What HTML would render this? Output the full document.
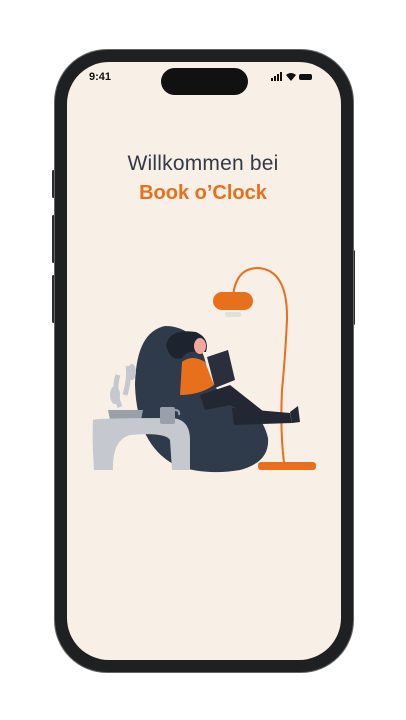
<!DOCTYPE html>
<html><head><meta charset="utf-8"><style>
html,body{margin:0;padding:0;background:#fff;width:406px;height:720px;overflow:hidden;font-family:"Liberation Sans",sans-serif}
.frame{position:absolute;left:55px;top:50px;width:298px;height:622px;border-radius:52px;background:#1f2022;box-shadow:0 0 0 1px #666}
.screen{position:absolute;left:67px;top:62px;width:274px;height:598px;border-radius:42px;background:#f8efe6;overflow:hidden}
.island{position:absolute;left:161px;top:68px;width:87px;height:27px;border-radius:14px;background:#111}
.btn{position:absolute;background:#2a2b2e;width:3px;border-radius:2px}
.t1{position:absolute;left:0;width:406px;top:152px;text-align:center;font-size:21px;color:#333a47;letter-spacing:0.2px}
.t2{position:absolute;left:0;width:406px;top:182px;text-align:center;font-size:20px;font-weight:bold;color:#e8701c}
.time{position:absolute;left:89px;top:71px;font-size:11px;font-weight:bold;color:#111}
</style></head><body>
<div class="btn" style="left:52px;top:170px;height:28px"></div>
<div class="btn" style="left:52px;top:215px;height:48px"></div>
<div class="btn" style="left:52px;top:275px;height:48px"></div>
<div class="btn" style="left:352px;top:250px;height:75px"></div>
<div class="frame"></div>
<div class="screen"></div>
<div class="island"></div>
<div class="time">9:41</div>
<svg style="position:absolute;left:270px;top:72px" width="44" height="10">
<rect x="1" y="6" width="2" height="3" fill="#111"/><rect x="4" y="4" width="2" height="5" fill="#111"/><rect x="7" y="2" width="2" height="7" fill="#111"/><rect x="10" y="0" width="2" height="9" fill="#111"/>
<path d="M16 3 Q21 -1 26 3 L21 9 Z" fill="#111"/>
<rect x="29" y="2" width="13" height="6" rx="2" fill="#111"/></svg>
<div class="t1">Willkommen bei</div>
<div class="t2">Book o’Clock</div>
<svg style="position:absolute;left:0;top:0" width="406" height="720">
<path d="M233 296 Q236 268 258 268 Q288 270 287 320 Q285 360 282 390 Q280 430 284 463" fill="none" stroke="#e8701c" stroke-width="2"/>
<rect x="258" y="462" width="58" height="8" rx="3" fill="#e8701c"/>
<rect x="213" y="292" width="40" height="18" rx="9" fill="#e8701c"/>
<rect x="225" y="312" width="16" height="5" rx="2" fill="#dde0dc"/>
<path d="M165 326 Q136 332 135 385 Q137 445 175 465 Q205 476 240 470 Q270 462 268 438 Q262 412 238 405 Q212 395 205 360 Q195 326 165 326Z" fill="#2f3a4a"/>
<path d="M166 345 Q170 328 196 332 Q210 338 206 352 L200 352 Q186 350 182 358 Q170 362 166 345Z" fill="#1e2330"/>
<ellipse cx="200" cy="346" rx="6" ry="8" fill="#f1a7a0"/>
<path d="M182 362 Q192 354 205 362 L214 385 Q200 395 180 395 Z" fill="#e8701c"/>
<path d="M207 357 L228 350 L235 380 L215 388 Z" fill="#2b2e3d"/>
<path d="M200 395 L230 385 L268 415 L262 420 L230 405 L205 410Z" fill="#222733"/>
<path d="M232 408 L290 413 L292 423 L234 425 Z" fill="#222733"/>
<path d="M290 412 L298 406 L300 422 L292 423Z" fill="#222733"/>
<path d="M120 407 Q113 390 118 375 M125 395 Q130 378 128 366" stroke="#c5c8cf" stroke-width="5" fill="none"/>
<ellipse cx="115" cy="395" rx="5" ry="9" fill="#c5c8cf"/>
<ellipse cx="132" cy="372" rx="4" ry="8" fill="#c5c8cf"/>
<path d="M108 410 L143 410 L140 425 L111 425Z" fill="#9aa0aa"/>
<path d="M93 420 Q95 418 170 418 Q190 418 190 440 L190 470 L172 470 L170 440 Q165 432 130 435 Q112 440 113 470 L94 470 Q92 440 93 420Z" fill="#c5c8cf"/>
<rect x="160" y="407" width="15" height="17" rx="2" fill="#9aa0aa"/>
<path d="M175 410 q5 0 4 5" stroke="#9aa0aa" stroke-width="2" fill="none"/>
</svg>
</body></html>
